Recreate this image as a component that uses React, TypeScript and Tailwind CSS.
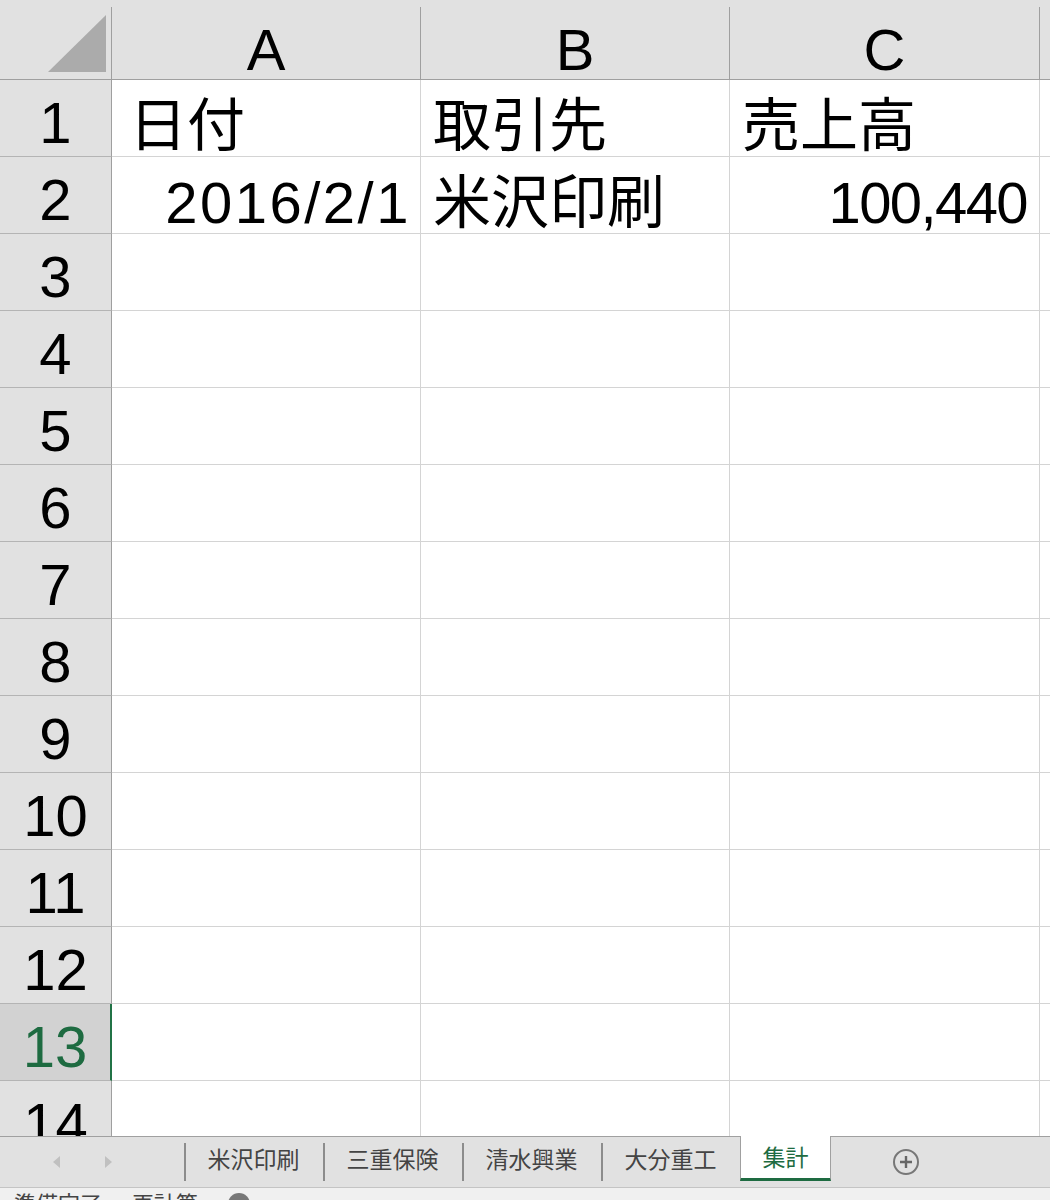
import React from 'react';

const font = "font-['Liberation_Sans','Noto_Sans_CJK_JP',sans-serif]";

const rows: { a?: string; b?: string; c?: string; alignA?: 'right' }[] = [
  { a: '日付', b: '取引先', c: '売上高' },
  { a: '2016/2/1', b: '米沢印刷', c: '100,440', alignA: 'right' },
];

const sheets = ['米沢印刷', '三重保険', '清水興業', '大分重工'];

function Cell({
  text,
  right,
  width,
  pad = 'pl-[12px]',
  track = '',
}: {
  text?: string;
  right?: boolean;
  width: string;
  pad?: string;
  track?: string;
}) {
  return (
    <div
      className={`${width} h-full shrink-0 border-r border-b border-[#d4d4d4] flex items-end pb-[1px] overflow-visible whitespace-nowrap ${
        right ? 'justify-end pr-[12px]' : `justify-start ${pad}`
      }`}
    >
      {text && <span className={`text-[58px] leading-none text-black ${track}`}>{text}</span>}
    </div>
  );
}

export default function App() {
  const total = 14;
  return (
    <div className={`w-[1050px] h-[1200px] overflow-hidden flex flex-col bg-white ${font}`}>
      {/* grid */}
      <div className="flex-1 overflow-hidden flex flex-col">
        {/* column headers */}
        <div className="flex h-[80px] shrink-0 bg-[#e1e1e1] border-b border-[#9f9f9f]">
          <div className="w-[112px] shrink-0 flex flex-col">
            <div className="h-[7px]" />
            <div className="flex-1 border-r border-[#9f9f9f] relative">
              <svg className="absolute left-0 top-[-7px]" width="111" height="79" viewBox="0 0 111 79">
                <polygon points="48,72 106,15 106,72" fill="#ababab" />
              </svg>
            </div>
          </div>
          {['A', 'B', 'C', ''].map((l, i) => (
            <div
              key={i}
              className={`${i === 3 ? 'flex-1' : i === 2 ? 'w-[310px]' : 'w-[309px]'} shrink-0 flex flex-col`}
            >
              <div className="h-[7px]" />
              <div
                className={`flex-1 flex items-end justify-center ${i === 3 ? '' : 'border-r border-[#9f9f9f]'}`}
              >
                <span className="text-[58px] leading-none text-black">{l}</span>
              </div>
            </div>
          ))}
        </div>
        {/* rows */}
        {Array.from({ length: total }, (_, i) => {
          const n = i + 1;
          const d = rows[i] || {};
          const sel = n === 13;
          return (
            <div key={n} className="flex h-[77px] shrink-0">
              <div
                className={`w-[112px] shrink-0 h-full flex items-end justify-center pb-[4px] border-b border-[#b4b4b4] ${
                  sel
                    ? 'bg-[#d2d2d2] border-r-2 border-r-[#217346] text-[#1e6b41]'
                    : 'bg-[#e1e1e1] border-r border-r-[#9f9f9f] text-black'
                }`}
              >
                <span className="text-[58px] leading-none">{n}</span>
              </div>
              <Cell
                width="w-[309px]"
                text={d.a}
                right={d.alignA === 'right'}
                pad="pl-[17px]"
                track={d.alignA === 'right' ? 'tracking-[2.5px] mr-[-3px]' : ''}
              />
              <Cell width="w-[309px]" text={d.b} />
              <Cell width="w-[310px]" text={d.c} right={i === 1} track={i === 1 ? 'tracking-[-1.6px]' : ''} />
              <div className="flex-1 h-full border-b border-[#d4d4d4]" />
            </div>
          );
        })}
      </div>

      {/* sheet tabs */}
      <div className="h-[52px] shrink-0 flex bg-[#e1e1e1] border-b border-[#c4c4c4] relative">
        <div className="absolute left-0 right-0 top-0 h-px bg-[#a0a0a0]" />
        <div className="w-[184px] shrink-0 flex items-center">
          <div className="w-[53px]" />
          <span className="w-0 h-0 border-y-[6px] border-y-transparent border-r-[7px] border-r-[#c0c0c0]" />
          <div className="w-[45px]" />
          <span className="w-0 h-0 border-y-[6px] border-y-transparent border-l-[7px] border-l-[#c0c0c0]" />
        </div>
        {sheets.map((s) => (
          <div key={s} className="w-[139px] shrink-0 flex items-center relative">
            <div className="absolute left-0 top-[7px] bottom-[6px] w-[2px] bg-[#8c8c8c]" />
            <span className="w-full text-center text-[23px] text-[#444] leading-none pb-[3px]">{s}</span>
          </div>
        ))}
        <div className="w-[91px] shrink-0 h-[45px] bg-white border-x border-[#a0a0a0] border-b-[3px] border-b-[#1e6b41] flex items-center justify-center relative z-10">
          <span className="text-[23px] text-[#1e6b41] leading-none pt-[2px]">集計</span>
        </div>
        <div className="flex-1 flex items-center">
          <div className="ml-[62px] w-[26px] h-[26px] rounded-full border-2 border-[#777] flex items-center justify-center">
            <svg width="14" height="14" viewBox="0 0 14 14">
              <path d="M7 1v12M1 7h12" stroke="#666" strokeWidth="2.4" />
            </svg>
          </div>
        </div>
      </div>

      {/* status bar */}
      <div className="h-[12px] shrink-0 bg-[#f0f0f0] overflow-hidden relative">
        <div className="absolute top-[6px] left-[14px] flex items-start gap-[30px] text-[22px] leading-none text-[#444]">
          <span>準備完了</span>
          <span>再計算</span>
          <span className="mt-[-1px] w-[22px] h-[14px] bg-[#777] rounded-t-full" />
        </div>
      </div>
    </div>
  );
}
